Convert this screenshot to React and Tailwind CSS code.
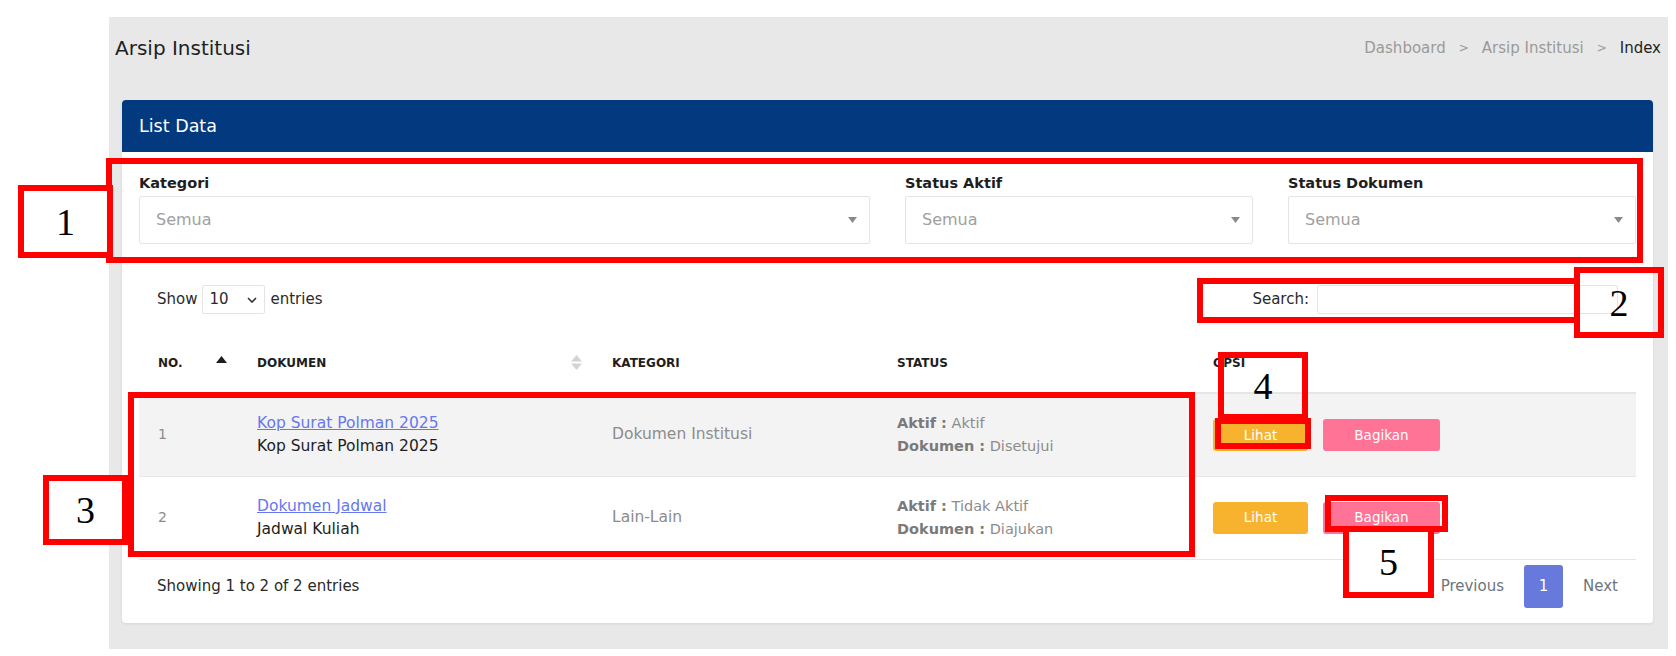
import React from 'react';

const font = { fontFamily: '"DejaVu Sans", "Open Sans", sans-serif' };

const rows = [
  {
    no: 1,
    link: 'Kop Surat Polman 2025',
    name: 'Kop Surat Polman 2025',
    kategori: 'Dokumen Institusi',
    aktif: 'Aktif',
    dokumen: 'Disetujui',
  },
  {
    no: 2,
    link: 'Dokumen Jadwal',
    name: 'Jadwal Kuliah',
    kategori: 'Lain-Lain',
    aktif: 'Tidak Aktif',
    dokumen: 'Diajukan',
  },
];

const Caret = () => (
  <svg width="9" height="6" viewBox="0 0 9 6" className="shrink-0">
    <path d="M0 0h9L4.5 6z" fill="#8a8a8a" />
  </svg>
);

const FilterSelect = ({ label }) => (
  <div className="flex flex-col">
    <label className="text-[14.5px] leading-5 font-bold text-[#1e1e1e] mb-[3px]">{label}</label>
    <div className="h-12 border border-[#e4e4e4] rounded-[2px] flex items-center justify-between pl-4 pr-[12px]">
      <span className="text-[16px] text-[#a0a0a0]">Semua</span>
      <Caret />
    </div>
  </div>
);

const SortUp = () => (
  <svg width="11" height="7" viewBox="0 0 11 7">
    <path d="M0 7L5.5 0 11 7z" fill="#1e1e1e" />
  </svg>
);

const SortBoth = () => (
  <svg width="11" height="15" viewBox="0 0 11 15">
    <path d="M0 6.5L5.5 0 11 6.5z" fill="#d4d4d4" />
    <path d="M0 8.5h11L5.5 15z" fill="#d4d4d4" />
  </svg>
);

// red annotation boxes laid over the screenshot
const Mark = ({ className, n, white }) => (
  <div
    className={`absolute border-[6px] border-[#ff0000] flex items-center justify-center ${white ? 'bg-white' : ''} ${className}`}>
    {n && (
      <span className="text-[38px] leading-none text-black" style={{ fontFamily: '"Liberation Serif", serif' }}>
        {n}
      </span>
    )}
  </div>
);

export default function App() {
  return (
    <div className="relative w-[1676px] h-[656px] bg-white overflow-hidden" style={font}>
      <div className="pt-[17px] pl-[109px] pr-[8px]">
        <div className="h-[632px] bg-[#e8e8e8] pl-[13px] pr-[15px]">
          {/* page header */}
          <div className="h-[62px] mb-[21px] flex items-center justify-between -ml-[7px] -mr-[8px]">
            <h1 className="text-[20px] text-[#1f1f1f]">Arsip Institusi</h1>
            <div className="flex items-center gap-[13px] text-[15px]">
              <span className="text-[#9a9a9a]">Dashboard</span>
              <span className="text-[#9a9a9a] text-[12px]">&gt;</span>
              <span className="text-[#9a9a9a]">Arsip Institusi</span>
              <span className="text-[#9a9a9a] text-[12px]">&gt;</span>
              <span className="text-[#1f1f1f]">Index</span>
            </div>
          </div>

          {/* card */}
          <div className="bg-white rounded-[4px] shadow-[0_1px_3px_rgba(0,0,0,0.08)] h-[523px] flex flex-col">
            <div className="h-[52px] bg-[#03397e] rounded-t-[4px] flex items-center px-[17px]">
              <span className="text-[17.5px] text-white">List Data</span>
            </div>

            <div className="px-[17px] pt-[21px]">
              <div className="grid grid-cols-[1fr_348px_348px] gap-[35px]">
                <FilterSelect label="Kategori" />
                <FilterSelect label="Status Aktif" />
                <FilterSelect label="Status Dokumen" />
              </div>

              {/* datatable controls */}
              <div className="mt-[41px] px-[18px] flex items-center justify-between h-[29px] text-[15px] text-[#2a2a2a]">
                <div className="flex items-center">
                  <span>Show</span>
                  <div className="ml-[5px] mr-[5px] w-[63px] h-[29px] border border-[#e4e4e4] rounded-[2px] flex items-center justify-between pl-[6px] pr-[7px]">
                    <span>10</span>
                    <svg width="10" height="6" viewBox="0 0 10 6">
                      <path d="M1 1l4 4 4-4" fill="none" stroke="#333" strokeWidth="1.6" />
                    </svg>
                  </div>
                  <span>entries</span>
                </div>
                <div className="flex items-center gap-2">
                  <span>Search:</span>
                  <div className="w-[301px] h-[29px] border border-[#e4e4e4] rounded-[2px]" />
                </div>
              </div>

              {/* table */}
              <table className="mt-[19px] w-full border-collapse table-fixed">
                <colgroup>
                  <col className="w-[99px]" />
                  <col className="w-[355px]" />
                  <col className="w-[285px]" />
                  <col className="w-[316px]" />
                  <col />
                </colgroup>
                <thead>
                  <tr className="h-[60px] border-b-2 border-[#e6e6e6] text-left text-[12px] text-[#1e1e1e]">
                    <th className="pl-[19px] pr-[11px] font-semibold">
                      <div className="flex items-center justify-between">
                        <span>NO.</span>
                        <span className="-mt-[6px]">
                          <SortUp />
                        </span>
                      </div>
                    </th>
                    <th className="pl-[19px] pr-[11px] font-semibold">
                      <div className="flex items-center justify-between">
                        <span>DOKUMEN</span>
                        <SortBoth />
                      </div>
                    </th>
                    <th className="pl-[19px] font-semibold">KATEGORI</th>
                    <th className="pl-[19px] font-semibold">STATUS</th>
                    <th className="pl-[19px] font-semibold">OPSI</th>
                  </tr>
                </thead>
                <tbody>
                  {rows.map((r, i) => (
                    <tr
                      key={r.no}
                      className={`h-[83px] border-b border-[#e6e6e6] ${i % 2 === 0 ? 'bg-[#f3f3f3]' : 'bg-white'}`}>
                      <td className="pl-[19px] text-[14px] text-[#8c8c8c]">{r.no}</td>
                      <td className="pl-[19px] text-[15.5px] leading-[23px]">
                        <a className="text-[#6777ef] underline block">{r.link}</a>
                        <div className="text-[#1e1e1e]">{r.name}</div>
                      </td>
                      <td className="pl-[19px] text-[15.5px] text-[#8c8c8c]">{r.kategori}</td>
                      <td className="pl-[19px] text-[14.5px] leading-[23px] text-[#8c8c8c]">
                        <div>
                          <b className="text-[#7a7a7a]">Aktif :</b> {r.aktif}
                        </div>
                        <div>
                          <b className="text-[#7a7a7a]">Dokumen :</b> {r.dokumen}
                        </div>
                      </td>
                      <td className="pl-[19px]">
                        <div className="flex items-center gap-[15px] text-[13.5px] text-white">
                          <button className="h-[32px] w-[95px] rounded-[3px] bg-[#f7b32e]">Lihat</button>
                          <button className="h-[32px] w-[117px] rounded-[3px] bg-[#ff7396]">Bagikan</button>
                        </div>
                      </td>
                    </tr>
                  ))}
                </tbody>
              </table>

              {/* footer */}
              <div className="mt-[5px] px-[18px] flex items-center justify-between">
                <span className="text-[15px] text-[#2a2a2a]">Showing 1 to 2 of 2 entries</span>
                <div className="flex items-center gap-5 text-[15px] text-[#6c757d]">
                  <span>Previous</span>
                  <span className="w-[39px] h-[43px] rounded-[3px] bg-[#6779db] text-white flex items-center justify-center">
                    1
                  </span>
                  <span>Next</span>
                </div>
              </div>
            </div>
          </div>
        </div>
      </div>

      {/* annotations */}
      <Mark className="left-[106px] top-[158px] w-[1537px] h-[105px]" />
      <Mark className="left-[18px] top-[185px] w-[95px] h-[73px]" n="1" white />
      <Mark className="left-[1197px] top-[278px] w-[383px] h-[45px]" />
      <Mark className="left-[1574px] top-[267px] w-[90px] h-[71px]" n="2" />
      <Mark className="left-[128px] top-[392px] w-[1067px] h-[165px]" />
      <Mark className="left-[43px] top-[475px] w-[85px] h-[70px]" n="3" white />
      <Mark className="left-[1218px] top-[352px] w-[90px] h-[68px]" n="4" />
      <Mark className="left-[1215px] top-[418px] w-[96px] h-[31px]" />
      <Mark className="left-[1325px] top-[495px] w-[123px] h-[37px]" />
      <Mark className="left-[1343px] top-[526px] w-[91px] h-[72px]" n="5" white />
    </div>
  );
}
